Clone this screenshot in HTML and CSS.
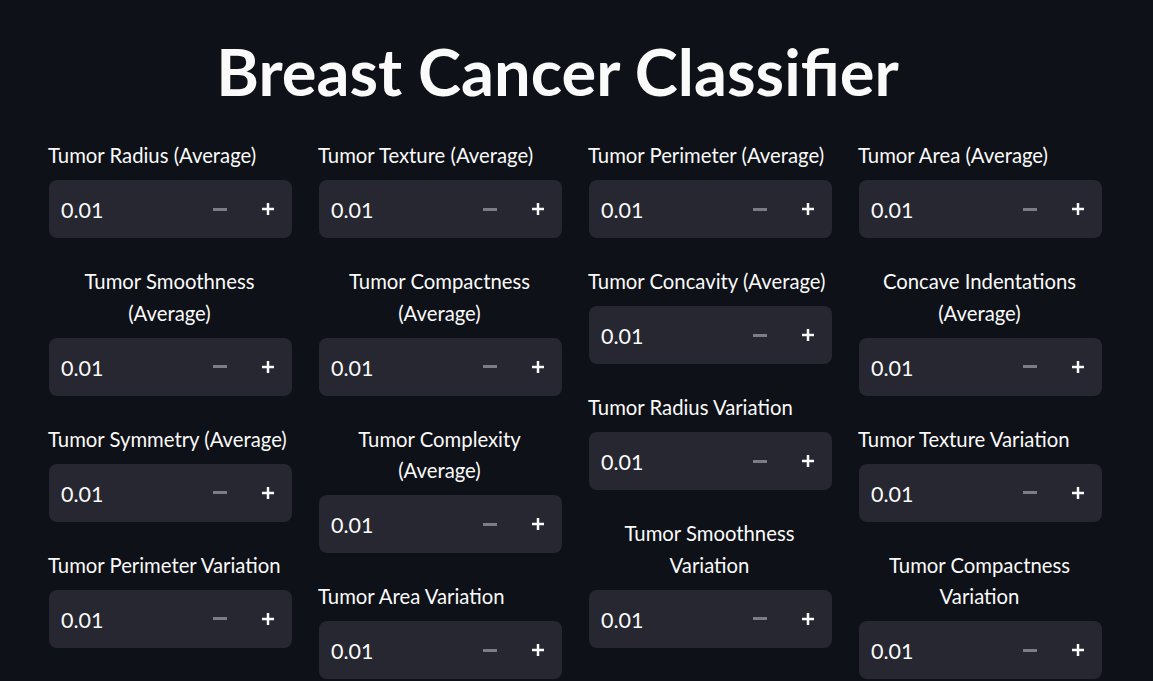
FILE: index.html
```html
<!DOCTYPE html>
<html lang="en">
<head>
<meta charset="utf-8">
<title>Breast Cancer Classifier</title>
<link rel="stylesheet" href="styles.css">
</head>
<body>
<main class="app">
  <h1 class="title">Breast Cancer Classifier</h1>
  <div class="grid">
    <div class="col">
      <div class="field"><label class="label">Tumor Radius (Average)</label><div class="input"><span class="value">0.01</span><span class="step minus"><svg width="14" height="3" viewBox="0 0 14 3"><rect width="14" height="3" fill="currentColor"/></svg></span><span class="step plus"><svg width="12" height="12" viewBox="0 0 12 12"><rect x="0" y="4.75" width="12" height="2.5" fill="currentColor"/><rect x="4.75" y="0" width="2.5" height="12" fill="currentColor"/></svg></span></div></div>
      <div class="field"><label class="label">Tumor Smoothness (Average)</label><div class="input"><span class="value">0.01</span><span class="step minus"><svg width="14" height="3" viewBox="0 0 14 3"><rect width="14" height="3" fill="currentColor"/></svg></span><span class="step plus"><svg width="12" height="12" viewBox="0 0 12 12"><rect x="0" y="4.75" width="12" height="2.5" fill="currentColor"/><rect x="4.75" y="0" width="2.5" height="12" fill="currentColor"/></svg></span></div></div>
      <div class="field"><label class="label">Tumor Symmetry (Average)</label><div class="input"><span class="value">0.01</span><span class="step minus"><svg width="14" height="3" viewBox="0 0 14 3"><rect width="14" height="3" fill="currentColor"/></svg></span><span class="step plus"><svg width="12" height="12" viewBox="0 0 12 12"><rect x="0" y="4.75" width="12" height="2.5" fill="currentColor"/><rect x="4.75" y="0" width="2.5" height="12" fill="currentColor"/></svg></span></div></div>
      <div class="field"><label class="label">Tumor Perimeter Variation</label><div class="input"><span class="value">0.01</span><span class="step minus"><svg width="14" height="3" viewBox="0 0 14 3"><rect width="14" height="3" fill="currentColor"/></svg></span><span class="step plus"><svg width="12" height="12" viewBox="0 0 12 12"><rect x="0" y="4.75" width="12" height="2.5" fill="currentColor"/><rect x="4.75" y="0" width="2.5" height="12" fill="currentColor"/></svg></span></div></div>
    </div>
    <div class="col">
      <div class="field"><label class="label">Tumor Texture (Average)</label><div class="input"><span class="value">0.01</span><span class="step minus"><svg width="14" height="3" viewBox="0 0 14 3"><rect width="14" height="3" fill="currentColor"/></svg></span><span class="step plus"><svg width="12" height="12" viewBox="0 0 12 12"><rect x="0" y="4.75" width="12" height="2.5" fill="currentColor"/><rect x="4.75" y="0" width="2.5" height="12" fill="currentColor"/></svg></span></div></div>
      <div class="field"><label class="label">Tumor Compactness (Average)</label><div class="input"><span class="value">0.01</span><span class="step minus"><svg width="14" height="3" viewBox="0 0 14 3"><rect width="14" height="3" fill="currentColor"/></svg></span><span class="step plus"><svg width="12" height="12" viewBox="0 0 12 12"><rect x="0" y="4.75" width="12" height="2.5" fill="currentColor"/><rect x="4.75" y="0" width="2.5" height="12" fill="currentColor"/></svg></span></div></div>
      <div class="field"><label class="label">Tumor Complexity (Average)</label><div class="input"><span class="value">0.01</span><span class="step minus"><svg width="14" height="3" viewBox="0 0 14 3"><rect width="14" height="3" fill="currentColor"/></svg></span><span class="step plus"><svg width="12" height="12" viewBox="0 0 12 12"><rect x="0" y="4.75" width="12" height="2.5" fill="currentColor"/><rect x="4.75" y="0" width="2.5" height="12" fill="currentColor"/></svg></span></div></div>
      <div class="field"><label class="label">Tumor Area Variation</label><div class="input"><span class="value">0.01</span><span class="step minus"><svg width="14" height="3" viewBox="0 0 14 3"><rect width="14" height="3" fill="currentColor"/></svg></span><span class="step plus"><svg width="12" height="12" viewBox="0 0 12 12"><rect x="0" y="4.75" width="12" height="2.5" fill="currentColor"/><rect x="4.75" y="0" width="2.5" height="12" fill="currentColor"/></svg></span></div></div>
    </div>
    <div class="col">
      <div class="field"><label class="label">Tumor Perimeter (Average)</label><div class="input"><span class="value">0.01</span><span class="step minus"><svg width="14" height="3" viewBox="0 0 14 3"><rect width="14" height="3" fill="currentColor"/></svg></span><span class="step plus"><svg width="12" height="12" viewBox="0 0 12 12"><rect x="0" y="4.75" width="12" height="2.5" fill="currentColor"/><rect x="4.75" y="0" width="2.5" height="12" fill="currentColor"/></svg></span></div></div>
      <div class="field"><label class="label">Tumor Concavity (Average)</label><div class="input"><span class="value">0.01</span><span class="step minus"><svg width="14" height="3" viewBox="0 0 14 3"><rect width="14" height="3" fill="currentColor"/></svg></span><span class="step plus"><svg width="12" height="12" viewBox="0 0 12 12"><rect x="0" y="4.75" width="12" height="2.5" fill="currentColor"/><rect x="4.75" y="0" width="2.5" height="12" fill="currentColor"/></svg></span></div></div>
      <div class="field"><label class="label">Tumor Radius Variation</label><div class="input"><span class="value">0.01</span><span class="step minus"><svg width="14" height="3" viewBox="0 0 14 3"><rect width="14" height="3" fill="currentColor"/></svg></span><span class="step plus"><svg width="12" height="12" viewBox="0 0 12 12"><rect x="0" y="4.75" width="12" height="2.5" fill="currentColor"/><rect x="4.75" y="0" width="2.5" height="12" fill="currentColor"/></svg></span></div></div>
      <div class="field"><label class="label">Tumor Smoothness Variation</label><div class="input"><span class="value">0.01</span><span class="step minus"><svg width="14" height="3" viewBox="0 0 14 3"><rect width="14" height="3" fill="currentColor"/></svg></span><span class="step plus"><svg width="12" height="12" viewBox="0 0 12 12"><rect x="0" y="4.75" width="12" height="2.5" fill="currentColor"/><rect x="4.75" y="0" width="2.5" height="12" fill="currentColor"/></svg></span></div></div>
    </div>
    <div class="col">
      <div class="field"><label class="label">Tumor Area (Average)</label><div class="input"><span class="value">0.01</span><span class="step minus"><svg width="14" height="3" viewBox="0 0 14 3"><rect width="14" height="3" fill="currentColor"/></svg></span><span class="step plus"><svg width="12" height="12" viewBox="0 0 12 12"><rect x="0" y="4.75" width="12" height="2.5" fill="currentColor"/><rect x="4.75" y="0" width="2.5" height="12" fill="currentColor"/></svg></span></div></div>
      <div class="field"><label class="label">Concave Indentations (Average)</label><div class="input"><span class="value">0.01</span><span class="step minus"><svg width="14" height="3" viewBox="0 0 14 3"><rect width="14" height="3" fill="currentColor"/></svg></span><span class="step plus"><svg width="12" height="12" viewBox="0 0 12 12"><rect x="0" y="4.75" width="12" height="2.5" fill="currentColor"/><rect x="4.75" y="0" width="2.5" height="12" fill="currentColor"/></svg></span></div></div>
      <div class="field"><label class="label">Tumor Texture Variation</label><div class="input"><span class="value">0.01</span><span class="step minus"><svg width="14" height="3" viewBox="0 0 14 3"><rect width="14" height="3" fill="currentColor"/></svg></span><span class="step plus"><svg width="12" height="12" viewBox="0 0 12 12"><rect x="0" y="4.75" width="12" height="2.5" fill="currentColor"/><rect x="4.75" y="0" width="2.5" height="12" fill="currentColor"/></svg></span></div></div>
      <div class="field"><label class="label">Tumor Compactness Variation</label><div class="input"><span class="value">0.01</span><span class="step minus"><svg width="14" height="3" viewBox="0 0 14 3"><rect width="14" height="3" fill="currentColor"/></svg></span><span class="step plus"><svg width="12" height="12" viewBox="0 0 12 12"><rect x="0" y="4.75" width="12" height="2.5" fill="currentColor"/><rect x="4.75" y="0" width="2.5" height="12" fill="currentColor"/></svg></span></div></div>
    </div>
  </div>
</main>
</body>
</html>
```
FILE: styles.css
```css
html, body {
  margin: 0;
  padding: 0;
  background: #0e1117;
}
body {
  color: #fafafa;
  font-family: "Lato", "Noto Sans", sans-serif;
  height: 681px;
  overflow: hidden;
}
.app {
  width: 1053px;
  margin-left: 49px;
  padding-top: 31px;
}
.title {
  margin: 0 0 29px 0;
  padding-right: 36px;
  text-align: center;
  font-size: 65px;
  line-height: 80px;
  font-weight: 700;
  letter-spacing: 0;
}
.grid {
  display: flex;
  gap: 27px;
}
.col {
  width: 243px;
  display: flex;
  flex-direction: column;
  gap: 28px;
}
.field {
  display: flex;
  flex-direction: column;
}
.label {
  display: block;
  width: fit-content;
  max-width: 100%;
  text-align: center;
  font-size: 20.3px;
  line-height: 31.5px;
  margin-left: -1px;
  margin-bottom: 8.5px;
}
.input {
  height: 58px;
  background: #262730;
  border-radius: 8px;
  display: flex;
  align-items: center;
}
.value {
  flex: 1;
  padding-left: 12px;
  font-size: 21.5px;
  padding-top: 2px;
}
.step {
  width: 48px;
  height: 58px;
  display: flex;
  align-items: center;
  justify-content: center;
}
.minus { color: #7a7c88; }
.plus { color: #fafafa; }
```
